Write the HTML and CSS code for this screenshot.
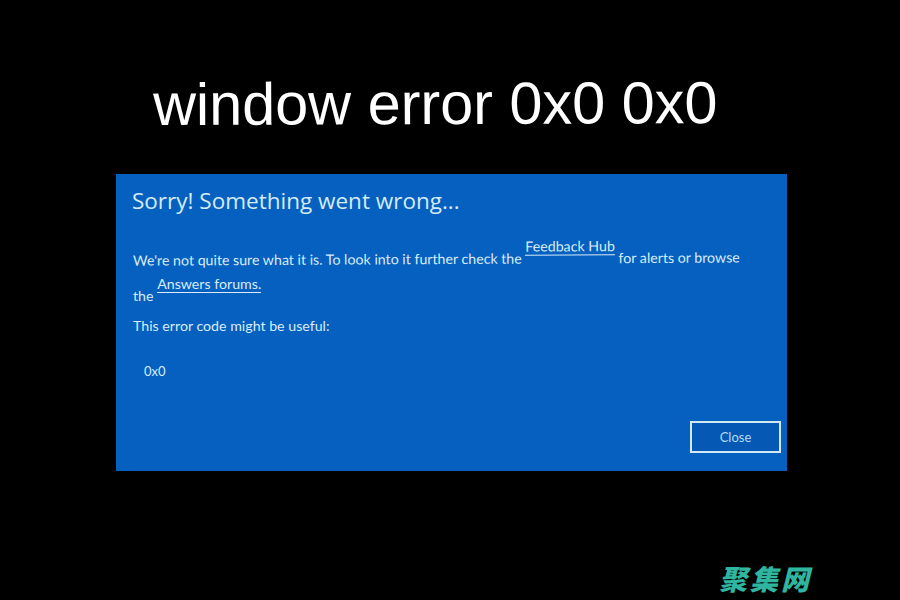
FILE: index.html
```html
<!DOCTYPE html>
<html lang="en">
<head>
  <meta charset="UTF-8">
  <meta name="viewport" content="width=device-width, initial-scale=1.0">
  <title>window error 0x0 0x0</title>
  <link rel="stylesheet" href="styles.css">
</head>
<body>
  <h1 class="headline">window error 0x0 0x0</h1>

  <div class="error-panel">
    <h2 class="error-title">Sorry! Something went wrong...</h2>
    <p class="error-text first-line">We're not quite sure what it is. To look into it further check the <a class="raised-link" href="#">Feedback Hub</a> for alerts or browse</p>
    <p class="error-text second-line">the <a class="raised-link" href="#">Answers forums.</a></p>
    <p class="error-text useful-line">This error code might be useful:</p>
    <p class="error-code">0x0</p>
    <div class="button-row">
      <button class="close-button">Close</button>
    </div>
  </div>

  <div class="watermark">聚集网</div>
</body>
</html>
```

FILE: styles.css
```css
html, body {
  height: 100%;
}
body {
  margin: 0;
  background-color: #000000;
  overflow: hidden;
}
.headline {
  margin: 0;
  padding: 72px 0 0 153px;
  height: 174px;
  box-sizing: border-box;
  font-family: "Liberation Sans", Arial, sans-serif;
  font-size: 59.4px;
  line-height: 64px;
  font-weight: 400;
  color: #ffffff;
  white-space: nowrap;
  transform: rotate(-0.2deg);
}
.error-panel {
  display: flex;
  flex-direction: column;
  box-sizing: border-box;
  width: 671px;
  height: 297px;
  margin-left: 116px;
  padding: 12px 6px 0 16px;
  background-color: #0560c0;
  color: #d9ecf7;
  font-family: Lato, sans-serif;
}
.error-title {
  margin: 0;
  font-family: "Open Sans", sans-serif;
  font-size: 22.5px;
  line-height: 30px;
  font-weight: 400;
  color: #d5ebf6;
}
.error-text {
  margin: 0 0 0 1px;
  font-size: 14.2px;
  line-height: 18px;
  white-space: nowrap;
}
.raised-link {
  color: #d9ecf7;
  vertical-align: 12px;
  line-height: 14px;
  text-decoration: none;
  border-bottom: 1px solid #d9ecf7;
}
.first-line {
  margin-top: 24px;
  transform: rotate(-0.3deg);
}
.second-line {
  margin-top: 9px;
}
.useful-line {
  margin-top: 12px;
}
.error-code {
  margin: 27px 0 0 12px;
  font-size: 13px;
  line-height: 18px;
}
.button-row {
  display: flex;
  justify-content: flex-end;
  margin-top: 41px;
}
.close-button {
  box-sizing: border-box;
  width: 91px;
  height: 32px;
  padding: 0;
  background-color: #0558b4;
  border: 2px solid #cfeaf6;
  color: #b5dcf0;
  font-family: Lato, sans-serif;
  font-size: 13px;
}
.watermark {
  margin: 91px 0 0 719px;
  font-family: "Noto Sans CJK SC", sans-serif;
  font-size: 28px;
  line-height: 32px;
  letter-spacing: 3px;
  font-weight: 900;
  font-style: italic;
  color: #2fb5a0;
}
```
